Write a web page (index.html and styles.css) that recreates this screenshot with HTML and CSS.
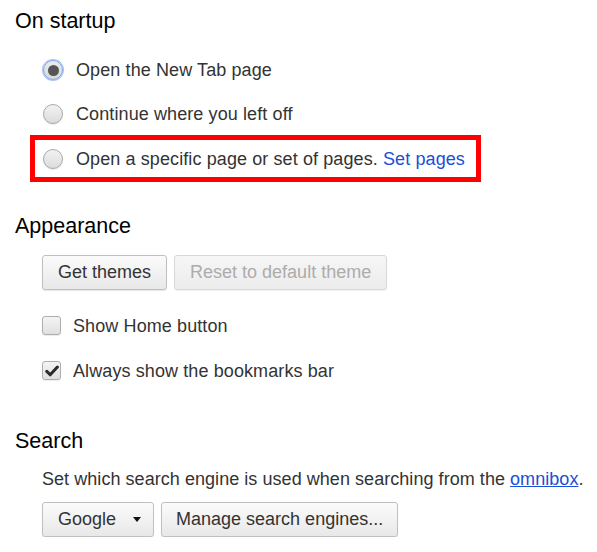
FILE: index.html
```html
<!DOCTYPE html>
<html>
<head>
<meta charset="utf-8">
<link rel="stylesheet" href="styles.css">
</head>
<body>
<div class="page">
  <section class="section startup">
    <h2 class="heading">On startup</h2>
    <div class="options">
      <label class="row">
        <span class="radio checked"><span class="dot"></span></span>
        <span class="label">Open the New Tab page</span>
      </label>
      <label class="row">
        <span class="radio"></span>
        <span class="label">Continue where you left off</span>
      </label>
      <div class="highlight">
        <label class="row row-hl">
          <span class="radio"></span>
          <span class="label">Open a specific page or set of pages. <a class="link" href="#">Set pages</a></span>
        </label>
      </div>
    </div>
  </section>

  <section class="section appearance">
    <h2 class="heading">Appearance</h2>
    <div class="buttons">
      <button class="btn">Get themes</button>
      <button class="btn disabled">Reset to default theme</button>
    </div>
    <div class="checks">
      <label class="row check-row">
        <span class="checkbox"></span>
        <span class="label">Show Home button</span>
      </label>
      <label class="row check-row">
        <span class="checkbox">
          <svg class="tick" viewBox="0 0 14 12" width="14" height="12"><path d="M1.8 6.4 L5.2 9.8 L12.4 2" fill="none" stroke="#2a2a2a" stroke-width="3" stroke-linecap="round" stroke-linejoin="round"/></svg>
        </span>
        <span class="label">Always show the bookmarks bar</span>
      </label>
    </div>
  </section>

  <section class="section search">
    <h2 class="heading">Search</h2>
    <p class="desc">Set which search engine is used when searching from the <a class="ulink" href="#">omnibox</a>.</p>
    <div class="buttons buttons-search">
      <button class="btn select">Google <span class="arrow"></span></button>
      <button class="btn manage">Manage search engines...</button>
    </div>
  </section>
</div>
</body>
</html>
```
FILE: styles.css
```css
html, body {
  margin: 0;
  padding: 0;
  background: #ffffff;
}
body {
  font-family: "Liberation Sans", Arial, Helvetica, sans-serif;
  color: #333333;
  font-size: 18px;
}
.page {
  padding: 9px 0 0 15px;
}
.heading {
  margin: 0;
  font-size: 21.5px;
  line-height: 24px;
  font-weight: normal;
  color: #000000;
}
.options {
  margin-top: 15px;
  padding-left: 28px;
}
.row {
  display: flex;
  align-items: center;
  height: 44px;
}
.label {
  line-height: 20px;
  white-space: nowrap;
  letter-spacing: 0.1px;
}
.radio {
  box-sizing: border-box;
  width: 20px;
  height: 20px;
  border-radius: 50%;
  border: 1px solid #a9a9a9;
  background: linear-gradient(#f2f2f2, #dcdcdc);
  box-shadow: 0 1px 1px rgba(0,0,0,0.1);
  margin-right: 13px;
  flex: none;
  display: flex;
  align-items: center;
  justify-content: center;
}
.radio.checked {
  border: 1px solid #7ea6ee;
  box-shadow: 0 0 0 1px #a9c5f4;
  background: linear-gradient(#ececec, #d8d8d8);
}
.dot {
  width: 11px;
  height: 11px;
  border-radius: 50%;
  background: #555555;
}
.highlight {
  margin: -1px 0 0 -13px;
  width: fit-content;
  border: 5px solid #ff0000;
  padding: 0 11px 0 8px;
}
.row-hl {
  height: 37px;
}
.link {
  color: #1a4fd6;
  text-decoration: none;
}
.appearance {
  margin-top: 32px;
}
.buttons {
  display: flex;
  gap: 7px;
  margin-top: 17px;
  padding-left: 27px;
}
.btn {
  box-sizing: border-box;
  height: 35px;
  padding: 0 15px;
  font-family: inherit;
  font-size: 18px;
  color: #333333;
  border: 1px solid #c0c0c0;
  border-radius: 3px;
  background: linear-gradient(#fbfbfb, #e8e8e8);
  box-shadow: 0 1px 1px rgba(0,0,0,0.1);
  display: flex;
  align-items: center;
  white-space: nowrap;
}
.btn.disabled {
  color: #acacac;
  border-color: #d8d8d8;
  background: linear-gradient(#f6f6f6, #ececec);
  box-shadow: 0 1px 1px rgba(0,0,0,0.05);
}
.btn.manage {
  padding: 0 14px;
}
.checks {
  margin-top: 13px;
  padding-left: 27px;
}
.check-row {
  height: 45px;
}
.checkbox {
  box-sizing: border-box;
  width: 19px;
  height: 19px;
  border: 1px solid #aeaeae;
  border-radius: 3px;
  background: linear-gradient(#f4f4f4, #e0e0e0);
  box-shadow: 0 1px 1px rgba(0,0,0,0.08);
  margin-right: 12px;
  flex: none;
  display: flex;
  align-items: center;
  justify-content: center;
}
.tick {
  display: block;
}
.search {
  margin-top: 36px;
}
.desc {
  margin: 16px 0 0 0;
  padding-left: 27px;
  line-height: 20px;
  white-space: nowrap;
  letter-spacing: 0.05px;
}
.ulink {
  color: #1a4fd6;
  text-decoration: underline;
}
.buttons-search {
  margin-top: 13px;
}
.select {
  padding: 0 12px 0 15px;
}
.arrow {
  width: 0;
  height: 0;
  border-left: 4px solid transparent;
  border-right: 4px solid transparent;
  border-top: 5px solid #111111;
  margin-left: 17px;
}
```
